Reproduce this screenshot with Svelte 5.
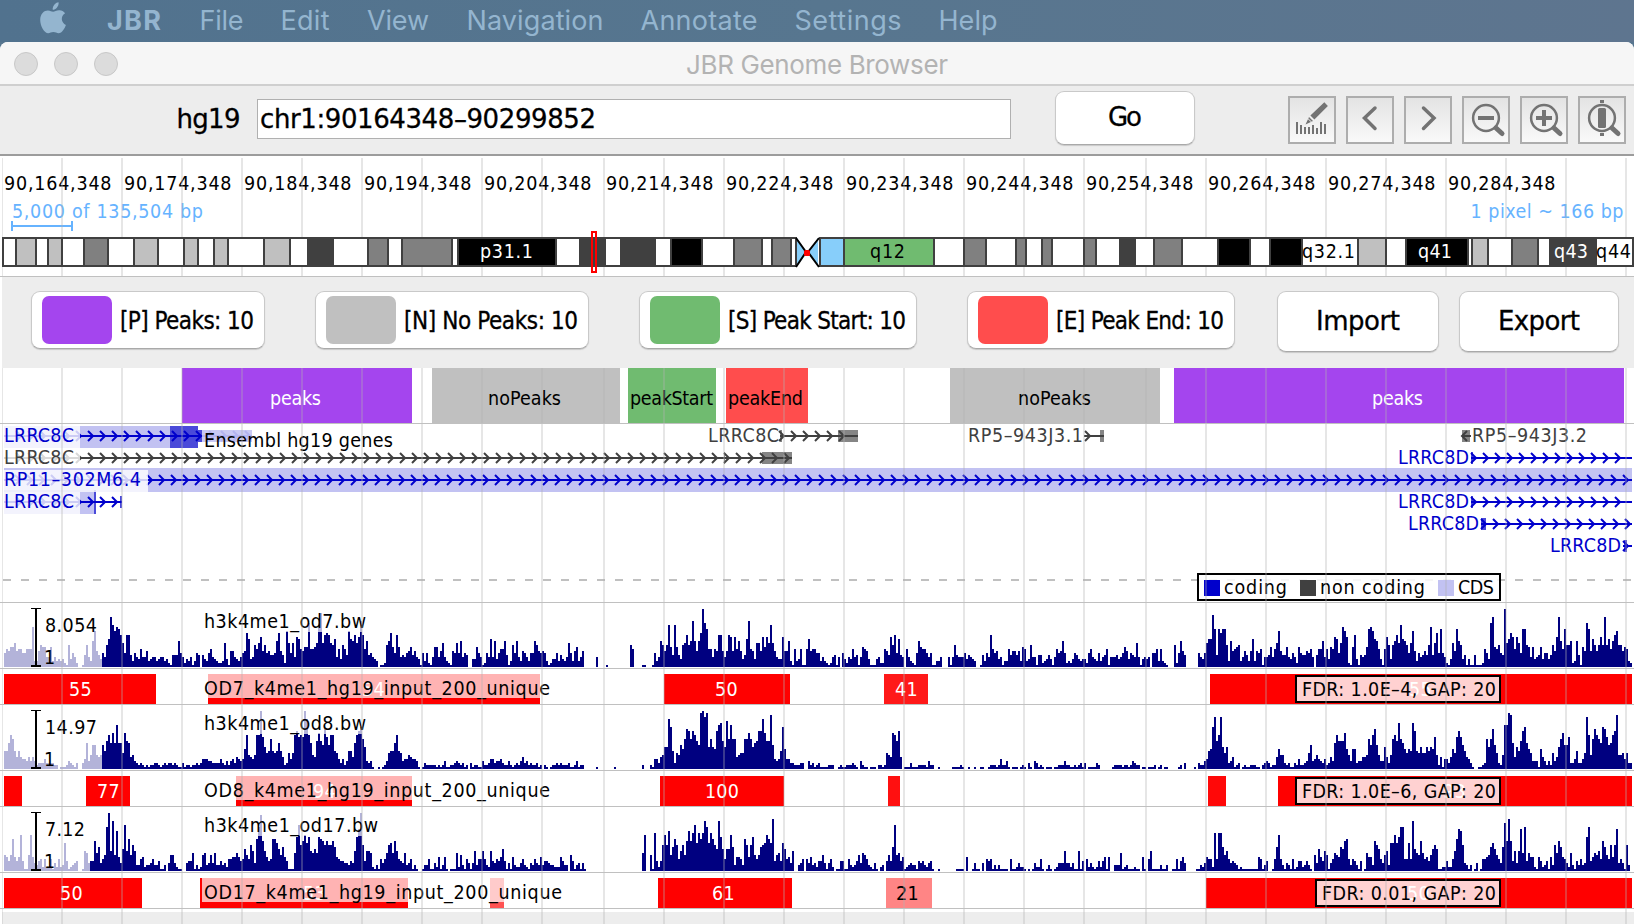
<script>
  const gridX = [61, 121, 181, 241, 301, 361, 421, 481, 541, 603, 663, 723, 783, 843, 903, 963, 1023, 1083, 1145, 1205, 1265, 1325, 1385, 1445, 1505, 1565, 1625];

  const menu = [
    ['File', 199.5, 44], ['Edit', 280.5, 49], ['View', 367, 62], ['Navigation', 466.5, 137],
    ['Annotate', 640.5, 117], ['Settings', 794.5, 107], ['Help', 938.5, 59],
  ];

  const ticks = [4, 124, 244, 364, 484, 606, 726, 846, 966, 1086, 1208, 1328, 1448]
    .map((x, i) => ({ x, label: `90,${164 + i * 10},348` }));

  const W = '#fff', L = '#c0c0c0', G = '#808080', D = '#404040', K = '#000';
  const bandEdges = [
    [3, W], [16, L], [36, W], [48, L], [62, W], [84, G], [108, W], [134, L], [158, W], [184, L], [198, W], [214, L], [228, W],
    [264, L], [290, W], [308, D], [333, W], [368, G], [388, W], [402, G], [452, W], [458, K], [556, W], [580, D], [605, W],
    [621, D], [655, W], [671, K], [702, W], [734, G], [762, W], [772, G], [791, W], [796, null], [820, '#87cefa'], [844, '#70bb70'],
    [934, W], [964, G], [986, W], [1016, G], [1026, W], [1042, G], [1052, W], [1084, G], [1096, W], [1120, D], [1135, W],
    [1154, G], [1182, W], [1218, K], [1250, W], [1270, K], [1302, W], [1358, L], [1386, W], [1406, K], [1468, W], [1472, L],
    [1488, W], [1512, G], [1538, W], [1550, D], [1596, W], [1633, null],
  ];
  const bands = bandEdges.slice(0, -1).map(([x, fill], i) => ({ x, fill, w: bandEdges[i + 1][0] - x })).filter((b) => b.fill);
  const bandLabels = [['p31.1', 480, 53, W], ['q12', 870, 35, K], ['q32.1', 1302, 53, K], ['q41', 1418, 34, W], ['q43', 1554, 34, W], ['q44', 1596, 35, K]];

  const labels = [
    { text: '[P] Peaks: 10', color: '#a445ee', w: 234, gap: 50, tw: 134 },
    { text: '[N] No Peaks: 10', color: '#c0c0c0', w: 274, gap: 50, tw: 174 },
    { text: '[S] Peak Start: 10', color: '#70bb70', w: 278, gap: 50, tw: 178 },
    { text: '[E] Peak End: 10', color: '#ff4d4d', w: 268, gap: 42, tw: 168 },
  ];

  const annotations = [
    ['peaks', 182, 412, '#a445ee', W, 270, 51], ['noPeaks', 432, 620, '#c0c0c0', K, 488, 73],
    ['peakStart', 628, 716, '#70bb70', K, 630, 83], ['peakEnd', 726, 808, '#ff4d4d', K, 728, 75],
    ['noPeaks', 950, 1160, '#c0c0c0', K, 1018, 73], ['peaks', 1174, 1624, '#a445ee', W, 1372, 51],
  ];

  const chevrons = (first, last, y, step = 12) => {
    let d = '';
    for (let x = first; x <= last; x += step) d += `M${x - 5} ${y - 5}L${x} ${y}L${x - 5} ${y + 5}`;
    return d;
  };

  const B = '#0000cc';
  const genes = [
    { y: 12, x1: 4, x2: 202, c: B, d: chevrons(21, 202, 12) },
    { y: 12, x1: 780, x2: 858, c: D, d: chevrons(784, 846, 12) },
    { y: 12, x1: 1084, x2: 1104, c: D, d: chevrons(1090, 1090, 12) },
    { y: 34, x1: 4, x2: 792, c: D, d: chevrons(21, 790, 34) },
    { y: 34, x1: 1471, x2: 1632, c: B, d: chevrons(1476, 1630, 34) },
    { y: 56, x1: 4, x2: 1632, c: B, d: chevrons(20, 1632, 56) },
    { y: 78, x1: 4, x2: 122, c: B, d: chevrons(21, 118, 78) },
    { y: 78, x1: 1471, x2: 1632, c: B, d: chevrons(1476, 1630, 78) },
    { y: 100, x1: 1481, x2: 1632, c: B, d: chevrons(1486, 1630, 100) },
    { y: 122, x1: 1623, x2: 1632, c: B, d: chevrons(1628, 1628, 122) },
  ];
  const geneNames = [
    ['LRRC8C', 4, 18, 70, B], ['LRRC8C', 4, 40, 70, D], ['RP11–302M6.4', 4, 62, 137, B], ['LRRC8C', 4, 84, 70, B],
    ['LRRC8C', 708, 18, 71, D], ['RP5–943J3.1', 968, 18, 115, D], ['RP5–943J3.2', 1472, 18, 115, D],
    ['LRRC8D', 1398, 40, 71, B], ['LRRC8D', 1398, 84, 71, B], ['LRRC8D', 1408, 106, 71, B], ['LRRC8D', 1550, 128, 71, B],
  ];

  // Coverage values, base 36, one character per two-pixel bin, twenty bins per row.
  const coverage = {
    od7: [
      '798AAC89977999K338BA', 'A55A35343421B4752001', '6B53DI86475BEPLIKJGC', '7GG63754955834553455', '3421666D752435137606',
      '4379543223C418854357', '8HE45B9CF8B78667DH86', '2IC7C5FE98AAM99ACORC', 'GHGCBE594B96IEDGCFNG', '9D675430112BDHA7GA56',
      '578A68541737215AA58C', '532187C7D5760044A751', '275E5D4799D613B7D538', '75377DB8787312447364', '35C738A3580000005000',
      '0100000000000B900001', '10001735DB8BLA6LA64B', 'CGBDND8DHTMJ99598GG8', '58GF8F9D846EN984CC8F', 'AFCLC8544F88D3193491',
      '19E89977353212561507', '425495615A9841114522', '986FBG7E650953217DA9', '975711335000515B6555', '7465430016375G978451',
      '339688683A934B551662', '346415978D7232476434', '42795437356915556457', 'A84765C5145450779393', '21000B27D86000000754',
      '7CEEQJ6JHJJB3D89AB35', '8638E38791556A59CI86', '6A54752A76687950699D', '594A9FE7CKIF21AG4165', '6AJKIED9419FB4BDGCLE',
      'DB7CI8375686BK6CH7J7', '5214C8JDB46141161112', '974MPA9B76TCEHF9FC7J', 'JBA5A456A47746B8FPD9', 'JBBD23D61A8MJ8EB8BFB',
      'PBE9DGIBB8A932',
    ],
    od8: [
      '99DHF969655464642333', '53333220111243213003', '5D47CC767C9EHDIDMDD8', 'IED67432321212233212', '32332321131221223235',
      '55443333532424536545', 'AH7657HHTGB89F989D96', '23858HJGHGTPHD76EIEC', 'KGCHH9853524996DHJLF', 'B43410010124899DH984',
      '55765541013222221212', '41122343231203122114', '22355344532242123246', '34232231202101223232', '22311241220000001000',
      '00000100000000000002', '0002155367BBPL9387CA', 'FKJFJHECSTQSBFBAJMNE', 'BOFMFF6788FFIFBDEJJP', 'IEERC5459LA553322233',
      '00423123111122200121', '12223210421101110221', '2876IHEJ601113111222', '21422001000000111121', '00100100110012221252',
      '24101110121031043121', '01110112224221121231', '30111132000000122221', '22124322011011120120', '11000001203000010322',
      '459ALQEHQB8B34612301', '21122211023431226A77', '3231132522348C457543', '52364DHEEEIA74AA3446', '67FCHKC744B637FHENFD',
      'A8A9NJ98B88B9BAG7261', '5536A8GJGC9653100112', '3FBFKC8327MMSRD6B9EJ', 'LDA84441A64242846BFI', 'CCG33593358QH7FKHFDL',
      'KGCDHJR7785833',
    ],
    od17: [
      '8758G757I5118I743562', '6226142623E512345001', 'A9455F9C468MTAP8K74B', 'NAG8DA33672334633511', '30488421100455913128',
      '93484933534266779756', 'B86DA4GMSFA756GGEB8C', '751119HNDFIEHA9B9HGF', 'DFDDFC765544354AHLTD', '5AA921316469DE9FA654',
      '93461310013361142713', '710111928316414A366A', '632A54657B5141732246', '32143643735543322275', '33085134141000000000',
      '00000000000000000009', 'I0081J525DIDK8CGD6AD', '8FKFJNEJGJPMEJGDBPHB', '6BBIC37763GD7DH868CD', 'EIGEQ5895EB674A00346',
      '06473425584146201155', '11632358498632141023', '0585CN89571234331545', '32451001000000001111', '07001411040656131311',
      '11061124221010142261', '0131012444A442411A15', '06242125257170033391', '2311121107106A111131', '13001161574000001132',
      '47662J6JJC8A64543121', '1111111761350016CI63', '14316125523531084B75', 'A8146987CBFG63653150', '19773FDB648A3EEIEHMM',
      '66E6PB98F96758BDB112', '25226AGLKD4313014016', '678CEB864COFQF5A4AL9', 'M5977217523517 3D9FC7', '64293153634HM5798A6F',
      'C86D7DL4641D3',
    ],
  };
  const profile = (rows) => {
    let d = '';
    rows.forEach((row, r) =>
      [...row.replaceAll(' ', '')].forEach((ch, i) => {
        const h = parseInt(ch, 36) * 2;
        if (h) d += `M${4 + (r * 20 + i) * 2} 64v${-h}h2v${h}z`;
      }));
    return d;
  };

  const R = '#ff0000';
  const samples = [
    {
      name: 'h3k4me1_od7.bw', nameW: 162, max: '8.054', maxW: 52, fadeTo: 102, d: profile(coverage.od7),
      peaksName: 'OD7_k4me1_hg19_input_200_unique', peaksW: 346, fdr: 'FDR: 1.0E–4, GAP: 20', fx: 1296, fw: 194,
      boxes: [[4, 156, R], [208, 540, R], [664, 790, R], [884, 928, '#ff1919'], [1210, 1632, R]],
      scores: [['55', 69, W], ['54', 362, W], ['50', 715, W], ['41', 895, W], ['55', 1409, W]],
    },
    {
      name: 'h3k4me1_od8.bw', nameW: 162, max: '14.97', maxW: 52, fadeTo: 102, d: profile(coverage.od8),
      peaksName: 'OD8_k4me1_hg19_input_200_unique', peaksW: 346, fdr: 'FDR: 1.0E–6, GAP: 20', fx: 1296, fw: 194,
      boxes: [[4, 22, R], [86, 130, R], [236, 412, R], [660, 784, R], [888, 900, '#ff1010'], [1208, 1226, '#ff0808'], [1278, 1632, R]],
      scores: [['77', 97, W], ['94', 313, W], ['100', 705, W], ['93', 1443, W]],
    },
    {
      name: 'h3k4me1_od17.bw', nameW: 174, max: '7.12', maxW: 40, fadeTo: 90, d: profile(coverage.od17),
      peaksName: 'OD17_k4me1_hg19_input_200_unique', peaksW: 358, fdr: 'FDR: 0.01, GAP: 20', fx: 1316, fw: 174,
      boxes: [[4, 142, R], [200, 408, R], [490, 504, '#ff5252'], [658, 792, R], [886, 932, '#ff8585'], [1206, 1632, R]],
      scores: [['50', 60, W], ['53', 303, W], ['61', 712, W], ['21', 896, K], ['50', 1407, W]],
    },
  ];
</script>

{#snippet grid(top, height)}
  <g class="grid">
    <rect x="2" y={top} width="1" {height} />
    {#each gridX as x}<rect {x} y={top} width="2" {height} />{/each}
  </g>
{/snippet}

<div class="screen">
  <nav class="menubar">
    <svg width="1634" height="42">
      <g class="menu-ink">
        <path d="M58.6 2.2c.3 2.3-.7 4.300-2 5.800-1.200 1.300-2.700 2-3.900 1.800-.3-2.200.7-4.200 2-5.600 1.100-1.100 2.600-1.900 3.900-2zM53.100 11.800c1.500 0 3.500-1.700 6.500-1.500 2 .1 4.100 1.100 5.500 3-4.900 3.200-4 9.500.8 11.600-1.100 3.200-3.900 8.300-7.300 8.300-2 0-2.900-1.200-5.200-1.200s-3.400 1.200-5.200 1.200c-3.700 0-8-7-8-13.200 0-6.200 3.900-9.500 7.700-9.500 2.300 0 3.800 1.300 5.200 1.300z" />
        <text x="107" y="30" class="bold" textLength="54">JBR</text>
        {#each menu as [label, x, w]}<text {x} y="30" textLength={w}>{label}</text>{/each}
      </g>
    </svg>
  </nav>

  <main class="window">
    <header class="titlebar">
      <div class="lights"><i></i><i></i><i></i></div>
      <svg width="280" height="42"><text x="10" y="32" textLength="262">JBR Genome Browser</text></svg>
    </header>

    <section class="toolbar">
      <svg class="ui" width="70" height="68"><text x="5.500" y="42" textLength="64">hg19</text></svg>
      <div class="location"><svg class="ui" width="400" height="38"><text x="2" y="28" textLength="336">chr1:90164348–90299852</text></svg></div>
      <button class="push go"><svg class="ui" width="60" height="52"><text x="13" y="34" textLength="34">Go</text></svg></button>
      <div class="tools">
        <button class="tool"><svg width="48" height="48"><path class="fill" d="M36.300 6.300l3.600 3.600-13.500 13.700-4-4zM21 21l4 4-7.500 3.500z" /><path class="fill" d="M8 26h2v12h-2zM12 29h2v9h-2zM16 31h2v7h-2zM20 31h2v7h-2zM24 29h2v9h-2zM28 32h2v6h-2zM32 26h2v12h-2zM36 28h2v10h-2z" /><path class="cut" d="M19.800 22.500l4 3.800" /></svg></button>
        <button class="tool"><svg width="48" height="48"><path class="arrow" d="M29 12L18.500 22L29 32.500" /></svg></button>
        <button class="tool"><svg width="48" height="48"><path class="arrow" d="M19.500 12L30 22L19.500 32.500" /></svg></button>
        <button class="tool"><svg width="48" height="48"><circle cx="24" cy="22" r="12.900" /><path class="handle" d="M34 32L40 37.500" /><path class="fill" d="M16 20h16v4h-16z" /></svg></button>
        <button class="tool"><svg width="48" height="48"><circle cx="24" cy="22" r="12.900" /><path class="handle" d="M34 32L40 37.500" /><path class="fill" d="M16 20h6v-6h4v6h6v4h-6v6h-4v-6h-6z" /></svg></button>
        <button class="tool"><svg width="48" height="48"><circle cx="24" cy="22" r="12.900" /><path class="handle" d="M34 32L40 37.500" /><path class="fill" d="M22 4h4v3h-4zM22 37h4v3h-4z" /><rect class="fill" x="20" y="12" width="8" height="20" rx="1.500" /></svg></button>
      </div>
    </section>

    <section class="ruler">
      <svg class="track" width="1634" height="120">
        {#each ticks as t}<text x={t.x} y="34" textLength="107.500">{t.label}</text>{/each}
        <g class="sky">
          <text x="12" y="62" textLength="191">5,000 of 135,504 bp</text>
          <text x="1470.500" y="62" textLength="153">1 pixel ~ 166 bp</text>
          <path d="M11 65h2v10h-2zM71 65h2v10h-2zM12 69h60v2h-60z" />
        </g>
        {@render grid(2, 118)}
        <g class="ideogram">
          {#each bands as b}<rect x={b.x} y="82" width={b.w} height="28" fill={b.fill} />{/each}
        </g>
        <path d="M797 82L807 97L797 110z" fill="#87cefa" />
        <path d="M818 82L807 97L818 110z" fill="#87cefa" />
        <path d="M796 82L806 96L796 111M819 82L808 96L819 111" fill="none" stroke="#000" stroke-width="2" />
        <rect x="804" y="94" width="6" height="6" rx="1.500" fill="red" />
        {#each bandLabels as [label, x, w, fill]}<text {x} y="102" textLength={w} {fill}>{label}</text>{/each}
        <rect x="592" y="76" width="4" height="40" fill="none" stroke="red" stroke-width="2" />
      </svg>
    </section>

    <section class="labels">
      {#each labels as l}
        <button class="push label" style:width="{l.w}px" style:margin-right="{l.gap}px">
          <span class="swatch" style:background={l.color}></span>
          <svg class="ui small" width="180" height="52"><text x="0" y="34.500" textLength={l.tw}>{l.text}</text></svg>
        </button>
      {/each}
      <button class="push import"><svg class="ui" width="100" height="56"><text x="8" y="36" textLength="84">Import</text></svg></button>
      <button class="push export"><svg class="ui" width="100" height="56"><text x="9" y="36" textLength="82">Export</text></svg></button>
    </section>

    <section class="annotation">
      <svg class="track" width="1634" height="55">
        {#each annotations as [name, x1, x2, fill, ink, tx, tw]}
          <rect x={x1} y="0" width={x2 - x1} height="55" {fill} />
          <text x={tx} y="36.500" textLength={tw} fill={ink}>{name}</text>
        {/each}
        {@render grid(0, 55)}
      </svg>
    </section>

    <section class="genes">
      <svg class="track" width="1634" height="178">
        <g fill="#c2c2f2">
          <rect x="4" y="2" width="194" height="22" /><rect x="4" y="44" width="1628" height="24" /><rect x="4" y="66" width="92" height="24" />
        </g>
        <rect x="4" y="66" width="92" height="2" fill="#a3a3e6" />
        <g fill="#4a4ad9">
          <rect x="170" y="2" width="28" height="22" /><rect x="198" y="6" width="54" height="12" />
          <rect x="94" y="66" width="2" height="24" /><rect x="120" y="72" width="2" height="12" /><rect x="1481" y="94" width="5" height="12" />
          <rect x="1471" y="28" width="2" height="12" /><rect x="1471" y="72" width="2" height="12" /><rect x="1624" y="116" width="3" height="12" />
        </g>
        <g fill="#858585">
          <rect x="838" y="6" width="20" height="12" /><rect x="1100" y="6" width="4" height="12" /><rect x="762" y="28" width="30" height="12" />
          <rect x="1462" y="6" width="8" height="12" /><rect x="780" y="6" width="2" height="12" /><rect x="724" y="28" width="1" height="12" />
        </g>
        {#each genes as g}
          <path d="M{g.x1} {g.y}H{g.x2}{g.d}" fill="none" stroke={g.c} stroke-width="2" />
        {/each}
        <path d="M202 12H252{chevrons(214, 250, 12)}" fill="none" stroke={B} stroke-width="2" />
        <path d="M1471 12H1462M1467 7L1462 12L1467 17" fill="none" stroke={D} stroke-width="2" />
        <g class="veil">
          <rect x="4" y="2" width="76" height="22" /><rect x="4" y="24" width="76" height="20" />
          <rect x="4" y="46" width="144" height="22" /><rect x="4" y="68" width="76" height="22" />
        </g>
        <rect x="202" y="2" width="196" height="26" fill="#fff" fill-opacity=".7" />
        <path d="M3 156H1632" stroke="#c0c0c0" stroke-width="2" stroke-dasharray="8 10" />
        {#each geneNames as [name, x, y, w, fill]}<text {x} {y} textLength={w} {fill}>{name}</text>{/each}
        <text x="204" y="22.500" textLength="189">Ensembl hg19 genes</text>
        <rect x="1198" y="150" width="302" height="26" fill="#fff" fill-opacity=".85" stroke="#000" stroke-width="2" />
        <rect x="1204" y="156" width="16" height="16" fill={B} />
        <rect x="1300" y="156" width="16" height="16" fill={D} />
        <rect x="1438" y="156" width="16" height="16" fill="#c2c2f2" />
        <text x="1224" y="170" textLength="63">coding</text>
        <text x="1320" y="170" textLength="105">non coding</text>
        <text x="1458" y="170" textLength="36">CDS</text>
        {@render grid(0, 178)}
      </svg>
    </section>

    {#each samples as s}
      <section class="coverage">
        <svg class="track" width="1634" height="65">
          <path class="bars" d={s.d} />
          <rect class="fade" x="4" y="0" width={s.fadeTo - 4} height="65" />
          <rect class="fade" x="202" y="0" width={s.nameW + 6} height="29" />
          <path class="axis" d="M31 5h10v1h-10zM35 5h2v59h-2zM31 62h10v2h-10z" />
          <text x="45" y="29" textLength={s.maxW}>{s.max}</text>
          <text x="44" y="61">1</text>
          <text x="204" y="25" textLength={s.nameW}>{s.name}</text>
          {@render grid(0, 65)}
        </svg>
      </section>
      <section class="islands">
        <svg class="track" width="1634" height="35">
          {#each s.boxes as [x1, x2, fill]}<rect x={x1} y="5" width={x2 - x1} height="30" {fill} />{/each}
          {#each s.scores as [score, x, fill]}<text {x} y="27" textLength={score.length * 11.300} {fill}>{score}</text>{/each}
          <rect class="fade" x="202" y="5" width={s.peaksW + 6} height="24" />
          <text x="204" y="25.500" textLength={s.peaksW}>{s.peaksName}</text>
          <rect x={s.fx} y="7" width={1500 - s.fx} height="26" fill="#fff" fill-opacity=".82" stroke="#000" stroke-width="2" />
          <text x={s.fx + 6} y="27" textLength={s.fw}>{s.fdr}</text>
          {@render grid(0, 35)}
        </svg>
      </section>
    {/each}

    <footer><svg width="1634" height="15"><rect x="2" y="3" width="1632" height="12" fill="#ededed" />{@render grid(0, 15)}</svg></footer>
  </main>
</div>

<style>
  :global(body) { margin: 0; background: #fff; overflow: hidden; }
  svg { display: block; flex: none; }
  text { white-space: pre; }
  button { font: inherit; padding: 0; margin: 0; box-sizing: border-box; }
  .screen { width: 1634px; height: 924px; overflow: hidden; background: #57768f; display: flex; flex-direction: column; }
  .menubar { height: 42px; background: linear-gradient(90deg, #51728e, #57768f 50%, #5e758f); }
  .menu-ink { fill: #94b5cf; font: 27px Inter, sans-serif; }
  .bold { font-weight: 700; }
  .window { height: 882px; background: #fff; border-radius: 8px 8px 0 0; overflow: hidden; display: flex; flex-direction: column; }
  .titlebar { height: 42px; background: #f6f6f6; border-bottom: 2px solid #cfcfcf; display: flex; align-items: center; flex: none; }
  .titlebar text { font: 26px Inter, sans-serif; fill: #b3b3b3; }
  .lights { display: flex; gap: 16px; padding: 2px 0 0 14px; margin-right: 558px; }
  .lights i { width: 24px; height: 24px; box-sizing: border-box; border: 1px solid #c8c8c8; border-radius: 50%; background: #dcdcdc; }
  .toolbar { height: 68px; background: #ededed; border-bottom: 2px solid #9c9c9c; display: flex; align-items: center; flex: none; padding-left: 171px; }
  .ui { font: 26px 'DejaVu Sans', sans-serif; overflow: visible; stroke: #000; stroke-width: .3px; }
  .small { font: 24px 'DejaVu Sans Condensed', 'DejaVu Sans', sans-serif; font-stretch: condensed; }
  .location { width: 754px; height: 40px; box-sizing: border-box; border: 1px solid #b0b0b0; background: #fff; margin-left: 16px; margin-top: -3px; }
  .push { border: 1px solid #c9c9c9; border-bottom-color: #a9a9a9; border-radius: 9px; background: #fff; box-shadow: 0 1px 1px #c8c8c8; display: flex; align-items: center; justify-content: center; flex: none; }
  .go { width: 140px; height: 54px; margin: -5px 93px 0 44px; }
  .tools { display: flex; gap: 10px; margin-top: -1px; }
  .tool { width: 48px; height: 48px; border: 2px solid #adadad; background: linear-gradient(#e3e3e3, #f9f9f9); display: flex; }
  .tool svg { margin: -2px; }
  .fill { fill: #737373; }
  .arrow { fill: none; stroke: #737373; stroke-width: 3.500; stroke-linecap: round; }
  .cut { stroke: #eee; stroke-width: 1; }
  circle { fill: none; stroke: #737373; stroke-width: 2.500; }
  .handle { stroke: #737373; stroke-width: 5; stroke-linecap: round; fill: none; }
  .track { font: 19.500px 'DejaVu Sans Condensed', 'DejaVu Sans', sans-serif; font-stretch: condensed; }
  .ruler, .annotation, .genes, .coverage, .islands { flex: none; border-bottom: 1px solid #c0c0c0; }
  .ruler { height: 120px; }
  .sky { fill: #66b3ff; }
  .ideogram rect { stroke: #404040; stroke-width: 2; }
  .labels { height: 91px; margin-left: 2px; background: #ededed; display: flex; flex: none; padding: 14px 0 0 29px; box-sizing: border-box; }
  .label { height: 58px; justify-content: flex-start; padding-left: 10px; overflow: hidden; gap: 8px; }
  .swatch { width: 70px; height: 48px; border-radius: 7px; margin-top: -1px; flex: none; }
  .import { width: 162px; height: 61px; margin-right: 20px; }
  .export { width: 160px; height: 61px; }
  .annotation { height: 55px; }
  .genes { height: 178px; }
  .coverage { height: 65px; }
  .islands { height: 35px; }
  .grid { fill: #b0b0b0; fill-opacity: .32; }
  .veil { fill: #fff; fill-opacity: .8; }
  .bars { fill: #000080; shape-rendering: crispEdges; }
  .fade { fill: #fff; fill-opacity: .7; }
  footer { height: 15px; flex: none; }
</style>
